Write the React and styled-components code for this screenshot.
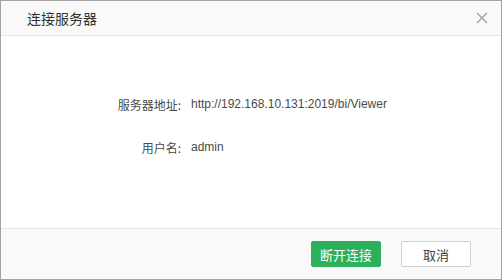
import React from "react";
import styled, { createGlobalStyle } from "styled-components";

const Global = createGlobalStyle`
  html, body { margin: 0; padding: 0; background: #fff; }
  body { font-family: "Liberation Sans", Arial, "Noto Sans CJK SC", sans-serif; }
`;

const Dialog = styled.div`
  width: 502px;
  height: 280px;
  box-sizing: border-box;
  border: 1px solid #a3a3a3;
  display: flex;
  flex-direction: column;
  background: #fff;
`;

const Header = styled.div`
  height: 35px;
  box-sizing: border-box;
  border-bottom: 1px solid #e6e6e6;
  background: #f9f9f9;
  display: flex;
  align-items: center;
  justify-content: space-between;
  padding: 0 13px 0 26px;
`;

const Title = styled.div`
  font-size: 14px;
  color: #333;
  font-family: "Noto Sans CJK SC", sans-serif;
`;

const Close = styled.button`
  border: 0;
  background: none;
  padding: 0;
  width: 12px;
  height: 12px;
  display: flex;
  cursor: pointer;
`;

const Body = styled.div`
  flex: 1;
  display: flex;
  flex-direction: column;
  padding-top: 58px;
  gap: 23px;
`;

const Row = styled.div`
  display: grid;
  grid-template-columns: 180px 1fr;
  align-items: center;
  height: 20px;
  font-size: 12px;
  color: #4a4a4a;
`;

const Label = styled.span`
  text-align: right;
  font-family: "Noto Sans CJK SC", sans-serif;
`;

const Value = styled.span`
  padding-left: 10px;
  font-family: "Liberation Sans", Arial, sans-serif;
`;

const Footer = styled.div`
  height: 51px;
  box-sizing: border-box;
  border-top: 1px solid #e6e6e6;
  background: #f9f9f9;
  display: flex;
  align-items: center;
  justify-content: flex-end;
  gap: 20px;
  padding: 0 30px 0 0;
`;

const Button = styled.button`
  width: 70px;
  height: 26px;
  box-sizing: border-box;
  border-radius: 2px;
  font-size: 13px;
  font-family: "Noto Sans CJK SC", sans-serif;
  border: 1px solid ${(p) => (p.$primary ? "#2ab15a" : "#cfcfcf")};
  background: ${(p) => (p.$primary ? "#2ab15a" : "#fff")};
  color: ${(p) => (p.$primary ? "#fff" : "#444")};
  padding: 0;
  cursor: pointer;
`;

export default function App() {
  return (
    <>
      <Global />
      <Dialog>
        <Header>
          <Title>连接服务器</Title>
          <Close aria-label="close">
            <svg width="12" height="12" viewBox="0 0 12 12">
              <path d="M1 1L11 11M11 1L1 11" stroke="#999" strokeWidth="1.1" />
            </svg>
          </Close>
        </Header>
        <Body>
          <Row>
            <Label>服务器地址:</Label>
            <Value>http://192.168.10.131:2019/bi/Viewer</Value>
          </Row>
          <Row>
            <Label>用户名:</Label>
            <Value>admin</Value>
          </Row>
        </Body>
        <Footer>
          <Button $primary>断开连接</Button>
          <Button>取消</Button>
        </Footer>
      </Dialog>
    </>
  );
}
